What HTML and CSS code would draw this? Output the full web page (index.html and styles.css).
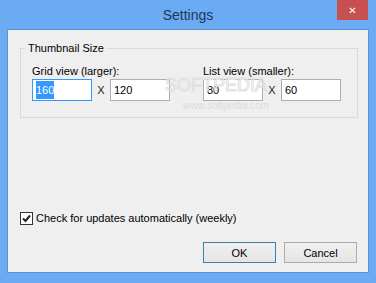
FILE: index.html
```html
<!DOCTYPE HTML>
<html lang="en">

<head>
    <meta charset="utf-8">
    <title>Settings</title>
    <link rel="stylesheet" href="styles.css">
</head>

<body>
    <div class="window">
        <div class="titlebar">
            <span class="title">Settings</span>
            <span class="close-btn">&#x2715;</span>
        </div>

        <div class="client">
            <fieldset class="group">
                <legend>Thumbnail Size</legend>
                <div class="size-grid">
                    <div class="size-col">
                        <div class="label">Grid view (larger):</div>
                        <div class="size-row">
                            <div class="textbox focused"><span class="selected">160</span></div>
                            <span class="times">X</span>
                            <div class="textbox">120</div>
                        </div>
                    </div>
                    <div class="size-col">
                        <div class="label">List view (smaller):</div>
                        <div class="size-row">
                            <div class="textbox">80</div>
                            <span class="times">X</span>
                            <div class="textbox">60</div>
                        </div>
                    </div>
                </div>
            </fieldset>

            <!-- watermark from the screenshot -->
            <div class="watermark">
                <div class="wm-big">SOFTPEDIA</div>
                <div class="wm-small">www.softpedia.com</div>
            </div>

            <label class="check-row">
                <span class="checkbox">
                    <svg width="9" height="9" viewBox="0 0 9 9"><path d="M1 4.5 L3.5 7 L8 1.5" fill="none" stroke="#222" stroke-width="2"/></svg>
                </span>
                Check for updates automatically (weekly)
            </label>

            <div class="buttons">
                <button class="btn default">OK</button>
                <button class="btn">Cancel</button>
            </div>
        </div>
    </div>
</body>

</html>
```

FILE: styles.css
```css
body {
    margin: 0;
    font-family: "Liberation Sans", Arial, sans-serif;
    font-size: 11px;
    color: #000;
}

.window {
    width: 376px;
    height: 283px;
    background-color: #6babf3; /* blue window frame */
    display: flex;
    flex-direction: column;
    position: relative;
}

.titlebar {
    height: 30px;
    display: flex;
    align-items: center;
    justify-content: center;
}

.title {
    font-size: 14px;
    color: #1e3757;
}

.close-btn {
    position: absolute;
    top: 0;
    right: 8px;
    width: 31px;
    height: 20px;
    background-color: #c75050;
    color: #fff;
    font-family: "DejaVu Sans", sans-serif;
    font-size: 10px;
    display: flex;
    align-items: center;
    justify-content: center;
}

.client {
    margin: 0 8px 11px 8px;
    flex: 1;
    background-color: #efefef;
    box-shadow: 0 0 0 1px #5a92d4;
    display: flex;
    flex-direction: column;
    padding: 10px 10px 9px 12px;
    position: relative;
}

.group {
    margin: 0;
    border: 1px solid #d9d9d9;
    padding: 7px 11px 16px 11px;
}

.group legend {
    padding: 0 3px;
    margin-left: -7px;
    line-height: 16px;
}

.size-grid {
    display: grid;
    grid-template-columns: 171px 1fr;
}

.label {
    line-height: 16px;
}

.size-row {
    display: flex;
    align-items: center;
}

.textbox {
    height: 20px;
    border: 1px solid #abadb3;
    background-color: #fff;
    line-height: 20px;
    padding-left: 3px;
    width: 55px;
}

.textbox.focused {
    border-color: #3399ff;
}

.selected {
    background-color: #3399ff;
    color: #fff;
    padding: 3px 0;
}

.times {
    width: 18px;
    text-align: center;
    color: #222;
}

.watermark {
    position: absolute;
    left: 157px;
    top: 44px;
    pointer-events: none;
}

.wm-big {
    font-size: 18px;
    line-height: 22px;
    color: transparent;
    -webkit-text-stroke: 1px #e0e0e0;
}

.wm-small {
    font-size: 10px;
    color: #dcdcdc;
    margin-top: 4px;
    padding-left: 18px;
}

.check-row {
    margin-top: auto;
    display: flex;
    align-items: center;
    gap: 3px;
    line-height: 16px;
    margin-bottom: -2px;
}

.checkbox {
    width: 11px;
    height: 11px;
    border: 1px solid #333;
    background-color: #fff;
    display: flex;
    align-items: center;
    justify-content: center;
}

.buttons {
    margin-top: 18px;
    display: flex;
    justify-content: flex-end;
    gap: 8px;
    padding-right: 1px;
}

.btn {
    width: 73px;
    height: 21px;
    font-family: inherit;
    font-size: 11px;
    border: 1px solid #acacac;
    background: linear-gradient(#f0f0f0, #e5e5e5);
    padding: 0;
}

.btn.default {
    border-color: #3c7fb1;
}
```
